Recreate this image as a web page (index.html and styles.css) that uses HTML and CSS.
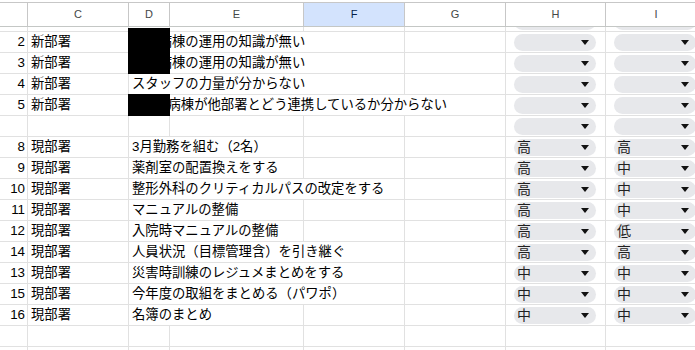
FILE: index.html
```html
<!DOCTYPE html>
<html lang="ja">
<head>
<meta charset="utf-8">
<title>Sheet</title>
<link rel="stylesheet" href="styles.css">
</head>
<body>
<div class="sheet">
  <div class="hdr">
    <div class="h"></div>
    <div class="h">C</div>
    <div class="h">D</div>
    <div class="h">E</div>
    <div class="h sel">F</div>
    <div class="h">G</div>
    <div class="h">H</div>
    <div class="h">I</div>
  </div>

  <div class="row sliver">
    <div class="c"></div><div class="c"></div><div class="c"></div><div class="c"></div><div class="c"></div><div class="c"></div>
    <div class="c dd"><span class="chip"><span class="v"></span><span class="arr"></span></span></div>
    <div class="c dd"><span class="chip"><span class="v"></span><span class="arr"></span></span></div>
  </div>

  <div class="row">
    <div class="c n">2</div><div class="c">新部署</div>
    <div class="c s3 d">〇〇病棟の運用の知識が無い<span class="redact tall"></span></div>
    <div class="c"></div>
    <div class="c dd"><span class="chip"><span class="v"></span><span class="arr"></span></span></div>
    <div class="c dd"><span class="chip"><span class="v"></span><span class="arr"></span></span></div>
  </div>
  <div class="row">
    <div class="c n">3</div><div class="c">新部署</div>
    <div class="c s3">〇〇病棟の運用の知識が無い</div>
    <div class="c"></div>
    <div class="c dd"><span class="chip"><span class="v"></span><span class="arr"></span></span></div>
    <div class="c dd"><span class="chip"><span class="v"></span><span class="arr"></span></span></div>
  </div>
  <div class="row">
    <div class="c n">4</div><div class="c">新部署</div>
    <div class="c s3">スタッフの力量が分からない</div>
    <div class="c"></div>
    <div class="c dd"><span class="chip"><span class="v"></span><span class="arr"></span></span></div>
    <div class="c dd"><span class="chip"><span class="v"></span><span class="arr"></span></span></div>
  </div>
  <div class="row">
    <div class="c n">5</div><div class="c">新部署</div>
    <div class="c s4 d">〇〇B病棟が他部署とどう連携しているか分からない<span class="redact one"></span></div>
    <div class="c dd"><span class="chip"><span class="v"></span><span class="arr"></span></span></div>
    <div class="c dd"><span class="chip"><span class="v"></span><span class="arr"></span></span></div>
  </div>
  <div class="row">
    <div class="c n"></div><div class="c"></div><div class="c"></div><div class="c"></div><div class="c"></div><div class="c"></div>
    <div class="c dd"><span class="chip"><span class="v"></span><span class="arr"></span></span></div>
    <div class="c dd"><span class="chip"><span class="v"></span><span class="arr"></span></span></div>
  </div>

  <div class="row">
    <div class="c n">8</div><div class="c">現部署</div>
    <div class="c s2">3月勤務を組む（2名）</div>
    <div class="c"></div><div class="c"></div>
    <div class="c dd"><span class="chip"><span class="v">高</span><span class="arr"></span></span></div>
    <div class="c dd"><span class="chip"><span class="v">高</span><span class="arr"></span></span></div>
  </div>
  <div class="row">
    <div class="c n">9</div><div class="c">現部署</div>
    <div class="c s2">薬剤室の配置換えをする</div>
    <div class="c"></div><div class="c"></div>
    <div class="c dd"><span class="chip"><span class="v">高</span><span class="arr"></span></span></div>
    <div class="c dd"><span class="chip"><span class="v">中</span><span class="arr"></span></span></div>
  </div>
  <div class="row">
    <div class="c n">10</div><div class="c">現部署</div>
    <div class="c s3">整形外科のクリティカルパスの改定をする</div>
    <div class="c"></div>
    <div class="c dd"><span class="chip"><span class="v">高</span><span class="arr"></span></span></div>
    <div class="c dd"><span class="chip"><span class="v">中</span><span class="arr"></span></span></div>
  </div>
  <div class="row">
    <div class="c n">11</div><div class="c">現部署</div>
    <div class="c s2">マニュアルの整備</div>
    <div class="c"></div><div class="c"></div>
    <div class="c dd"><span class="chip"><span class="v">高</span><span class="arr"></span></span></div>
    <div class="c dd"><span class="chip"><span class="v">中</span><span class="arr"></span></span></div>
  </div>
  <div class="row">
    <div class="c n">12</div><div class="c">現部署</div>
    <div class="c s2">入院時マニュアルの整備</div>
    <div class="c"></div><div class="c"></div>
    <div class="c dd"><span class="chip"><span class="v">高</span><span class="arr"></span></span></div>
    <div class="c dd"><span class="chip"><span class="v">低</span><span class="arr"></span></span></div>
  </div>
  <div class="row">
    <div class="c n">14</div><div class="c">現部署</div>
    <div class="c s3">人員状況（目標管理含）を引き継ぐ</div>
    <div class="c"></div>
    <div class="c dd"><span class="chip"><span class="v">高</span><span class="arr"></span></span></div>
    <div class="c dd"><span class="chip"><span class="v">高</span><span class="arr"></span></span></div>
  </div>
  <div class="row">
    <div class="c n">13</div><div class="c">現部署</div>
    <div class="c s3">災害時訓練のレジュメまとめをする</div>
    <div class="c"></div>
    <div class="c dd"><span class="chip"><span class="v">中</span><span class="arr"></span></span></div>
    <div class="c dd"><span class="chip"><span class="v">中</span><span class="arr"></span></span></div>
  </div>
  <div class="row">
    <div class="c n">15</div><div class="c">現部署</div>
    <div class="c s3">今年度の取組をまとめる（パワポ）</div>
    <div class="c"></div>
    <div class="c dd"><span class="chip"><span class="v">中</span><span class="arr"></span></span></div>
    <div class="c dd"><span class="chip"><span class="v">中</span><span class="arr"></span></span></div>
  </div>
  <div class="row">
    <div class="c n">16</div><div class="c">現部署</div>
    <div class="c s2">名簿のまとめ</div>
    <div class="c"></div><div class="c"></div>
    <div class="c dd"><span class="chip"><span class="v">中</span><span class="arr"></span></span></div>
    <div class="c dd"><span class="chip"><span class="v">中</span><span class="arr"></span></span></div>
  </div>
  <div class="row">
    <div class="c n"></div><div class="c"></div><div class="c"></div><div class="c"></div><div class="c"></div><div class="c"></div><div class="c"></div><div class="c"></div>
  </div>
  <div class="row">
    <div class="c n"></div><div class="c"></div><div class="c"></div><div class="c"></div><div class="c"></div><div class="c"></div><div class="c"></div><div class="c"></div>
  </div>
</div>
</body>
</html>
```

FILE: styles.css
```css
html, body {
  margin: 0;
  padding: 0;
  background: #fff;
}
body {
  padding-top: 2px;
  overflow: hidden;
  height: 350px;
  box-sizing: border-box;
  font-family: "Liberation Sans", Arial, "Noto Sans CJK JP", sans-serif;
}
.sheet {
  width: 695px;
  height: 348px;
  overflow: hidden;
}
.hdr, .row {
  display: grid;
  grid-template-columns: 28px 101px 41px 134px 101px 101px 100px 101px;
  width: 707px;
}
.hdr {
  border-top: 1px solid #c7c7c7;
  border-bottom: 1px solid #c4c7c5;
  box-sizing: border-box;
  height: 25px;
}
.h {
  border-right: 1px solid #c7c7c7;
  font-size: 11px;
  line-height: 23px;
  text-align: center;
  color: #444746;
}
.h.sel {
  background: #d3e3fd;
  color: #041e49;
}
.row {
  border-bottom: 1px solid #e1e1e1;
  height: 21px;
  box-sizing: border-box;
}
.c {
  border-right: 1px solid #e1e1e1;
  font-size: 13.33px;
  line-height: 20px;
  padding: 0 3px;
  white-space: nowrap;
  color: #000;
  min-width: 0;
}
.c.n {
  text-align: right;
  padding-right: 2px;
}
.s2 { grid-column: span 2; }
.s3 { grid-column: span 3; }
.s4 { grid-column: span 4; }
.d { position: relative; }
.redact {
  position: absolute;
  left: -1px;
  width: 42px;
  background: #000;
}
.redact.tall { top: -4px; height: 46px; }
.redact.one { top: -1px; height: 22px; }

.dd {
  padding: 0;
}
.chip {
  display: flex;
  align-items: center;
  justify-content: space-between;
  box-sizing: border-box;
  width: 82px;
  height: 17px;
  margin: 2px 0 0 8px;
  padding: 0 7px 0 3px;
  border-radius: 9px;
  background: #e7e8eb;
}
.v {
  font-size: 14px;
  line-height: 17px;
  color: #1f1f1f;
}
.arr {
  width: 0;
  height: 0;
  border-left: 4px solid transparent;
  border-right: 4px solid transparent;
  border-top: 5px solid #111;
}
.row.sliver {
  height: 5px;
}
.sliver .c {
  height: 4px;
  overflow: hidden;
}
.sliver .dd {
  display: flex;
  align-items: flex-end;
  padding-bottom: 1px;
  box-sizing: border-box;
  height: 4px;
}
.sliver .chip {
  flex: none;
  margin-top: 0;
}
```
